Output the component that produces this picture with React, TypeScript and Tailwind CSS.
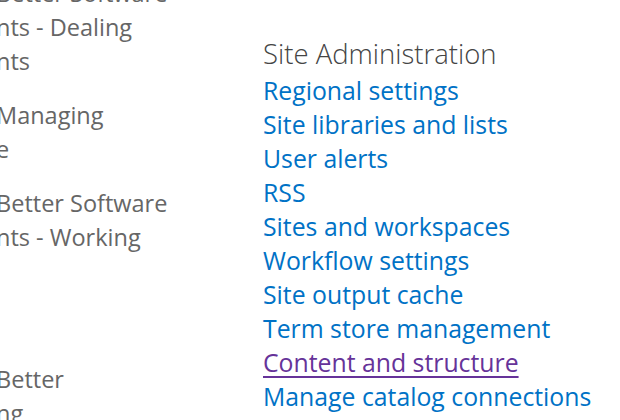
import React from "react";

const leftItems: string[][] = [
  ["Better Software", "nts - Dealing", "nts"],
  ["Managing", "e"],
  ["Better Software", "nts - Working", "s"],
  [""],
  ["Better", "ng"],
];

const links = [
  { label: "Regional settings" },
  { label: "Site libraries and lists" },
  { label: "User alerts" },
  { label: "RSS" },
  { label: "Sites and workspaces" },
  { label: "Workflow settings" },
  { label: "Site output cache" },
  { label: "Term store management" },
  { label: "Content and structure", visited: true },
  { label: "Manage catalog connections" },
];

function App() {
  return (
    <div
      className="flex w-[620px] h-[420px] overflow-hidden bg-white"
      style={{ fontFamily: '"Open Sans", "Noto Sans", sans-serif' }}
    >
      <div className="w-[263px] shrink-0 overflow-hidden">
        <div className="-mt-[24px] -ml-[4px] flex flex-col gap-[20px] text-[23.5px] leading-[34px] text-[#666]">
          {leftItems.map((lines, i) => (
            <div key={i}>
              {lines.map((line, j) => (
                <div
                  key={j}
                  className={
                    line === "s"
                      ? "whitespace-nowrap -ml-[9px] h-[34px]"
                      : "whitespace-nowrap h-[34px]"
                  }
                >
                  {line}
                </div>
              ))}
            </div>
          ))}
        </div>
      </div>
      <div className="pt-[37px] flex flex-col">
        <h2 className="text-[27.5px] leading-[34px] font-light text-[#444] whitespace-nowrap">
          Site Administration
        </h2>
        <ul className="mt-[2px] flex flex-col">
          {links.map((l) => (
            <li key={l.label} className="h-[34px] leading-[34px] whitespace-nowrap">
              <a
                href="#"
                className={
                  l.visited
                    ? "text-[24.8px] text-[#663399] underline underline-offset-[4px] decoration-[1.5px]"
                    : "text-[24.8px] text-[#0072c6]"
                }
              >
                {l.label}
              </a>
            </li>
          ))}
        </ul>
      </div>
    </div>
  );
}

export default App;
